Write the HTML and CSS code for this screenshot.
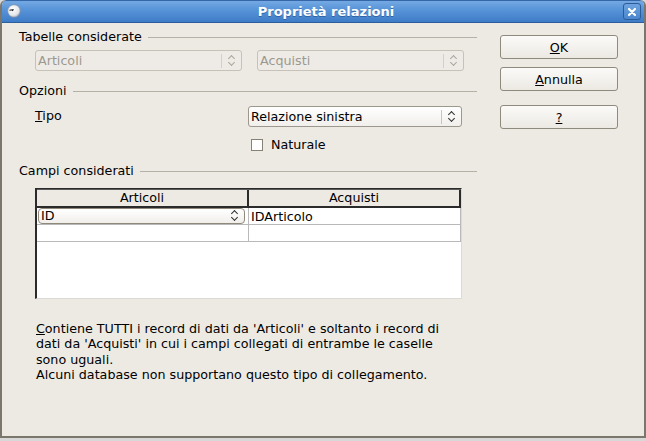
FILE: index.html
```html
<!DOCTYPE html>
<html lang="it">
  <head>
    <meta charset="UTF-8" />
    <title>Proprietà relazioni</title>
    <link rel="stylesheet" href="styles.css">
  </head>
  <body>
    <div class="window">
      <div class="titlebar">
        <svg class="app-icon" width="14" height="14" viewBox="0 0 14 14">
          <defs>
            <radialGradient id="ball" cx="0.4" cy="0.35" r="0.7">
              <stop offset="0" stop-color="#ffffff" />
              <stop offset="0.7" stop-color="#e4e6ea" />
              <stop offset="1" stop-color="#a9afb8" />
            </radialGradient>
          </defs>
          <circle cx="7" cy="7" r="6.3" fill="url(#ball)" stroke="#7d8aa0" stroke-width="0.7" />
          <path d="M2.5 6.2 L6 5.6 L5.5 7" fill="none" stroke="#222" stroke-width="1.1" />
        </svg>
        <span class="title">Proprietà relazioni</span>
        <span class="close">
          <svg width="10" height="10" viewBox="0 0 10 10">
            <path d="M2 2 L8 8 M8 2 L2 8" stroke="#fff" stroke-width="2.2" stroke-linecap="round" />
          </svg>
        </span>
      </div>

      <div class="content">
        <div class="main">
          <div class="section-head"><span>Tabelle considerate</span><span class="rule"></span></div>
          <div class="tables-row">
            <div class="combo disabled"><span class="combo-text">Articoli</span><span class="spin"></span></div>
            <div class="combo disabled"><span class="combo-text">Acquisti</span><span class="spin"></span></div>
          </div>

          <div class="section-head options-head"><span>Opzioni</span><span class="rule"></span></div>
          <div class="type-row">
            <span class="field-label"><u>T</u>ipo</span>
            <div class="combo type-combo"><span class="combo-text">Relazione sinistra</span><span class="spin"></span></div>
          </div>
          <label class="check-row"><span class="checkbox"></span>Naturale</label>

          <div class="section-head fields-head"><span>Campi considerati</span><span class="rule"></span></div>
          <div class="grid">
            <div class="grid-head">
              <div class="hcell">Articoli</div>
              <div class="hcell">Acquisti</div>
            </div>
            <div class="grid-row">
              <div class="cell"><div class="combo cell-combo"><span class="combo-text">ID</span><span class="spin"></span></div></div>
              <div class="cell">IDArticolo</div>
            </div>
            <div class="grid-row">
              <div class="cell"></div>
              <div class="cell"></div>
            </div>
          </div>

          <p class="info">
            <u>C</u>ontiene TUTTI i record di dati da 'Articoli' e soltanto i record di<br>
            dati da 'Acquisti' in cui i campi collegati di entrambe le caselle<br>
            sono uguali.<br>
            Alcuni database non supportano questo tipo di collegamento.
          </p>
        </div>

        <div class="buttons">
          <button type="button" class="btn"><u>O</u>K</button>
          <button type="button" class="btn"><u>A</u>nnulla</button>
          <button type="button" class="btn help"><u>?</u></button>
        </div>
      </div>
    </div>
  </body>
</html>
```

FILE: styles.css
```css
body {
  margin: 0;
  background: #d8d8d8;
  font-family: "DejaVu Sans", sans-serif;
  font-size: 12.7px;
  line-height: 15px;
  color: #000;
}
.window {
  width: 646px;
  height: 438px;
  box-sizing: border-box;
  background: #edeae4;
  border: 2px solid #7b776c;
  border-top: none;
  border-radius: 6px 6px 0 0;
  overflow: hidden;
  display: flex;
  flex-direction: column;
}
.titlebar {
  height: 23px;
  margin: 0 -2px;
  flex-shrink: 0;
  display: flex;
  align-items: center;
  background: linear-gradient(#74a9e3, #5592d7 45%, #3f7cc7);
  border-top: 1px solid #3567a8;
  border-bottom: 1px solid #2c5e9e;
  border-radius: 6px 6px 0 0;
  box-sizing: border-box;
  color: #fff;
}
.app-icon {
  margin-left: 7px;
  margin-top: -2px;
}
.title {
  flex: 1;
  text-align: center;
  font-weight: bold;
  font-size: 13px;
  margin-left: -14px;
  margin-right: -22px;
  text-shadow: 0 1px 0 #2f63a6;
}
.close {
  width: 16px;
  height: 15px;
  margin-right: 5px;
  border: 1px solid #2c5c98;
  border-radius: 3px;
  background: linear-gradient(#6ea3df, #4a87cf);
  display: flex;
  align-items: center;
  justify-content: center;
}
.content {
  flex: 1;
  display: flex;
}
.main {
  width: 458px;
  padding-left: 17px;
}
.section-head {
  display: flex;
  align-items: center;
  margin-top: 6px;
}
.section-head .rule {
  flex: 1;
  border-top: 1px solid #b6b1a6;
  margin-left: 6px;
  margin-top: 1px;
}
.tables-row {
  display: flex;
  gap: 15px;
  margin-top: 6px;
  padding-left: 16px;
}
.combo {
  height: 21px;
  box-sizing: border-box;
  border: 1px solid #9d988d;
  border-radius: 3px;
  background: linear-gradient(#ffffff, #f1efeb);
  display: flex;
  align-items: center;
}
.combo-text {
  flex: 1;
  padding-left: 2px;
  white-space: nowrap;
}
.spin {
  width: 19px;
  height: 14px;
  border-left: 1px solid #c9c5bc;
  position: relative;
}
.spin::before,
.spin::after {
  content: "";
  position: absolute;
  left: 7px;
  width: 4px;
  height: 4px;
  border-left: 1.5px solid #2e2e2e;
  border-top: 1.5px solid #2e2e2e;
}
.spin::before {
  top: 2px;
  transform: rotate(45deg);
}
.spin::after {
  top: 6px;
  transform: rotate(225deg);
}
.tables-row .combo {
  width: 207px;
}
.combo.disabled {
  border-color: #c7c2b8;
  background: #eeebe6;
  color: #9b9890;
}
.combo.disabled .spin {
  border-left-color: #d4d0c8;
}
.combo.disabled .spin::before,
.combo.disabled .spin::after {
  border-color: #a9a59c;
}
.options-head {
  margin-top: 12px;
}
.type-row {
  display: flex;
  align-items: center;
  margin-top: 8px;
  padding-left: 16px;
}
.field-label {
  width: 213px;
  margin-top: -3px;
}
.type-combo {
  width: 214px;
}
.check-row {
  display: flex;
  align-items: center;
  margin-top: 10px;
  padding-left: 232px;
}
.checkbox {
  width: 10px;
  height: 10px;
  border: 1px solid #858175;
  background: #fff;
  margin-right: 8px;
}
.fields-head {
  margin-top: 11px;
}
.grid {
  margin-top: 10px;
  margin-left: 16px;
  width: 427px;
  height: 111px;
  box-sizing: border-box;
  background: #fff;
  border-left: 2px solid #2b2b2b;
  border-top: 1px solid #2b2b2b;
  border-right: 1px solid #dcdad5;
  border-bottom: 1px solid #dcdad5;
}
.grid-head {
  display: flex;
  background: #edeae4;
  border-bottom: 2px solid #2b2b2b;
  border-top: 1px solid #5a5a5a;
}
.hcell {
  height: 16px;
  text-align: center;
  line-height: 16px;
  border-right: 2px solid #2b2b2b;
}
.hcell:first-child {
  width: 210px;
}
.hcell:last-child {
  flex: 1;
}
.grid-row {
  display: flex;
  height: 16px;
  border-bottom: 1px solid #b9b9b9;
}
.cell {
  display: flex;
  align-items: center;
  padding-left: 2px;
  border-right: 1px solid #b9b9b9;
}
.cell:first-child {
  width: 210px;
  padding: 0 0 0 1px;
}
.cell:last-child {
  flex: 1;
}
.cell-combo {
  width: 207px;
  height: 16px;
  border-color: #8f897c;
  border-radius: 4px;
  margin-top: -1px;
}
.cell-combo .spin {
  height: 12px;
  border-left: none;
}
.cell-combo .spin::before {
  top: 1px;
}
.cell-combo .spin::after {
  top: 5px;
}
.info {
  margin: 22px 0 0 17px;
  line-height: 15.4px;
}
.buttons {
  display: flex;
  flex-direction: column;
  padding-top: 12px;
  padding-left: 23px;
}
.btn {
  width: 118px;
  height: 24px;
  font-family: inherit;
  font-size: 12.7px;
  color: #000;
  border: 1px solid #8f8a7e;
  border-radius: 3px;
  background: linear-gradient(#fbfaf8, #ece9e3);
  margin-bottom: 8px;
  padding: 0;
}
.btn.help {
  margin-top: 6px;
}
```
